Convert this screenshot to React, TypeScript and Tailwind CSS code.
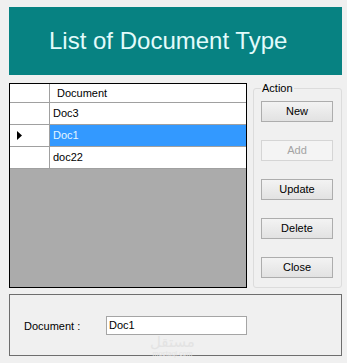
export default function App() {
  const rows = [
    { name: "Doc3", selected: false },
    { name: "Doc1", selected: true },
    { name: "doc22", selected: false },
  ];
  const buttons = [
    { label: "New", disabled: false },
    { label: "Add", disabled: true },
    { label: "Update", disabled: false },
    { label: "Delete", disabled: false },
    { label: "Close", disabled: false },
  ];

  return (
    <div className="w-[347px] h-[363px] overflow-hidden bg-[#f0f0f0] pt-[7px] px-[9px] font-['Liberation_Sans',Arial,sans-serif] text-[11px] leading-[13px] text-black">
      {/* Title bar */}
      <div className="h-[68px] w-[333px] bg-[#078282] flex items-center pl-[40px]">
        <h1 className="text-[24px] leading-[28px] text-[#e2fbfb]">List of Document Type</h1>
      </div>

      <div className="flex items-start mt-[7px] w-[333px]">
        {/* Data grid */}
        <div className="shrink-0 mt-[1px] w-[238px] h-[205px] border border-black bg-[#ababab] flex flex-col">
          <div className="flex h-[19px] bg-white border-b border-[#a0a0a0]">
            <div className="w-[40px] border-r border-[#a0a0a0]" />
            <div className="flex-1 pl-[7px] flex items-center">Document</div>
          </div>
          {rows.map((row) => (
            <div key={row.name} className="flex h-[22px] border-b border-[#a0a0a0]">
              <div className="w-[40px] bg-white border-r border-[#a0a0a0] flex items-center pl-[7px]">
                {row.selected && (
                  <svg width="5" height="9" viewBox="0 0 5 9">
                    <path d="M0 0 L5 4.5 L0 9 Z" fill="#000" />
                  </svg>
                )}
              </div>
              <div
                className={
                  row.selected
                    ? "flex-1 pl-[3px] flex items-center bg-[#3399ff] text-[#e4f6ff]"
                    : "flex-1 pl-[3px] flex items-center bg-white"
                }
              >
                {row.name}
              </div>
            </div>
          ))}
        </div>

        {/* Action group */}
        <fieldset className="shrink-0 min-w-0 ml-[6px] w-[89px] h-[206px] border border-[#dcdcdc] rounded-[3px] px-[7px]">
          <legend className="px-[1px]">Action</legend>
          <div className="flex flex-col gap-[18px] mt-[6px]">
            {buttons.map((b) => (
              <button
                key={b.label}
                disabled={b.disabled}
                className={
                  b.disabled
                    ? "w-[72px] h-[21px] border border-[#d5d5d5] bg-[#f4f4f4] text-[#a3a3a3]"
                    : "w-[72px] h-[21px] border border-[#adadad] bg-gradient-to-b from-[#f3f3f3] to-[#e2e2e2] text-black"
                }
              >
                {b.label}
              </button>
            ))}
          </div>
        </fieldset>
      </div>

      {/* Detail group */}
      <div className="relative mt-[6px] w-[333px] h-[62px] border border-[#6e6e6e] flex items-center pl-[14px]">
        <span className="w-[82px] mt-[3px]">Document :</span>
        <div className="w-[141px] h-[19px] border border-[#a5a5a5] bg-white flex items-center pl-[2px]">Doc1</div>
        <div className="absolute left-[140px] top-[40px] flex flex-col items-center text-[#e3e3e3]">
          <span className="text-[15px] leading-[15px] font-['DejaVu_Sans',sans-serif]">مستقل</span>
          <span className="text-[7px] leading-[8px]">mostaql.com</span>
        </div>
      </div>
    </div>
  );
}
